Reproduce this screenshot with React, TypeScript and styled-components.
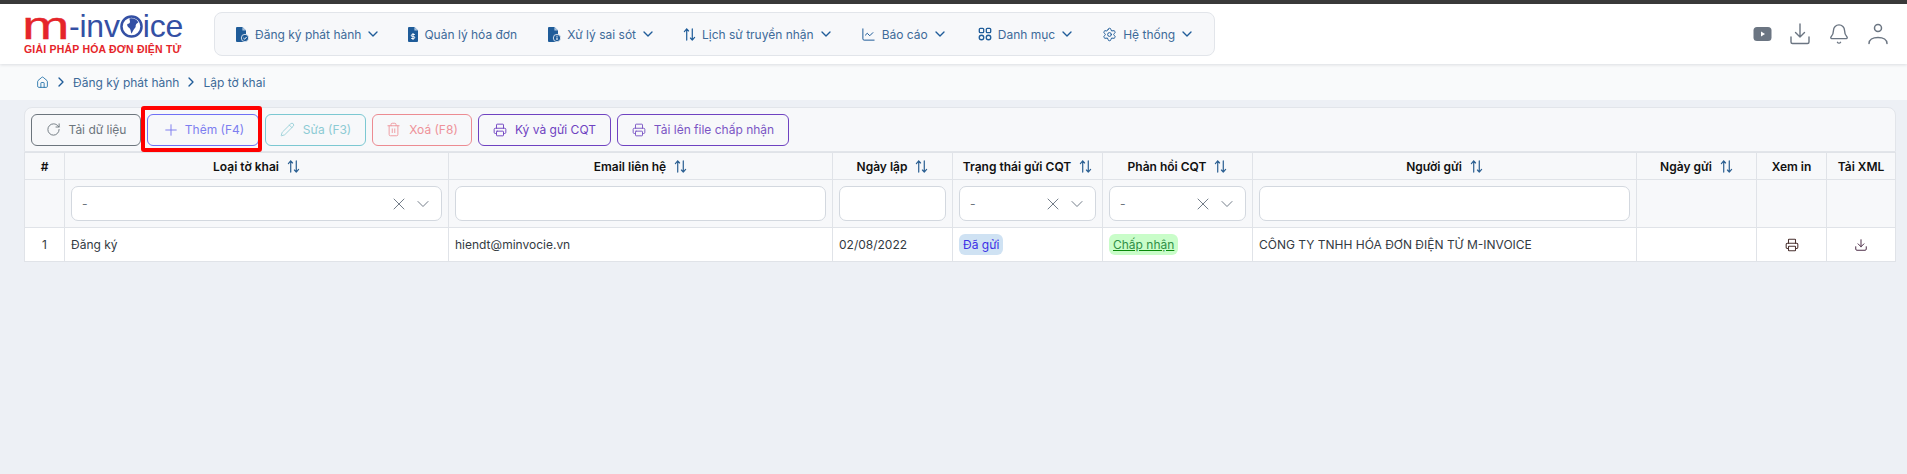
import styled, { createGlobalStyle } from "styled-components";
import {
  Bell,
  ChartLine,
  ChevronDown,
  ChevronRight,
  Download,
  House,
  Pencil,
  Plus,
  Printer,
  RotateCw,
  Settings,
  Trash2,
  X,
} from "lucide-react";

const GlobalStyle = createGlobalStyle`
  html, body {
    margin: 0;
    padding: 0;
    background: #edf0f5;
    min-height: 100%;
  }
  body {
    font-family: Inter, "Noto Sans", sans-serif;
    font-size: 12px;
    color: #212529;
  }
  * { box-sizing: border-box; }
`;

function FileBadge({ kind }: { kind: "check" | "dollar" | "info" }) {
  const wide = kind !== "dollar";
  return (
    <svg width={wide ? 13 : 10} height="15" viewBox={wide ? "0 0 13 15" : "0 0 10 15"}>
      <path
        d="M1 0h5.400L10 3.600V14a1 1 0 0 1-1 1H1a1 1 0 0 1-1-1V1a1 1 0 0 1 1-1z"
        fill="#1f5c99"
      />
      <path d="M6.400 0v3.600H10z" fill="#a9c3de" />
      {kind === "dollar" ? (
        <path d="M5 6v7M6.800 7.500H4.300a.9.9 0 0 0 0 2h1.400a.9.9 0 0 1 0 2H3.200" stroke="#fff" strokeWidth="1" fill="none" />
      ) : (
        <>
          <circle cx="9" cy="11" r="3.700" fill="#1f5c99" stroke="#f7f8fa" strokeWidth="0.800" />
          {kind === "check" ? (
            <path d="M7.400 11l1.200 1.200 2-2.200" stroke="#fff" strokeWidth="1" fill="none" />
          ) : (
            <path d="M9 10.500v2.500M9 8.700v1" stroke="#fff" strokeWidth="1.100" fill="none" />
          )}
        </>
      )}
    </svg>
  );
}

function SortArrows({ size = 13, color = "#2b5f92" }: { size?: number; color?: string }) {
  return (
    <svg width={size} height={size} viewBox="0 0 14 14" fill="none" stroke={color} strokeWidth="1.300" strokeLinecap="round" strokeLinejoin="round">
      <path d="M4 13V1M1.500 3.800L4 1l2 2.200" />
      <path d="M10 1v12M8 10.800l2 2.200 2.500-2.800" />
    </svg>
  );
}

function GridIcon() {
  return (
    <svg width="14" height="14" viewBox="0 0 16 16" fill="none" stroke="#1f5c99" strokeWidth="1.500">
      <rect x="1.500" y="1.500" width="5" height="5" rx="1.200" />
      <rect x="9.500" y="1.500" width="5" height="5" rx="1.200" />
      <circle cx="4" cy="12" r="2.600" />
      <circle cx="12" cy="12" r="2.600" />
    </svg>
  );
}

function Globe() {
  return (
    <svg width="23" height="23" viewBox="0 0 22 22">
      <circle cx="11" cy="11" r="9.600" fill="#fff" stroke="#3450a4" strokeWidth="2.400" />
      <path d="M9 3.500c3-1 7 .5 8.500 3.500-1 1.500-2 1-2.500 3 .5 2-1.500 3-2.500 5l-1.500 3c-1-2.500-.5-4-2-5.500-1.500-1-2.500-2.500-2-4 1.500 0 3-1 2.500-2.500z" fill="#3450a4" />
    </svg>
  );
}

function YoutubeIcon() {
  return (
    <svg width="19" height="16" viewBox="0 0 19 16">
      <rect x="0.500" y="1" width="18" height="14" rx="3.500" fill="#6b7582" />
      <path d="M8 5.500l4 2.500-4 2.500z" fill="#fff" />
    </svg>
  );
}

function SaveIcon() {
  return (
    <svg width="20" height="22" viewBox="0 0 20 22" fill="none" stroke="#6b7582" strokeWidth="1.400" strokeLinecap="round" strokeLinejoin="round">
      <path d="M10 1v13M5.500 9.500L10 14l4.500-4.500" />
      <path d="M1 14v5a1.500 1.500 0 0 0 1.500 1.500h15A1.500 1.500 0 0 0 19 19v-5" />
    </svg>
  );
}

function PersonIcon() {
  return (
    <svg width="20" height="22" viewBox="0 0 20 22" fill="none" stroke="#6b7582" strokeWidth="1.500" strokeLinecap="round">
      <circle cx="10" cy="5" r="3.500" />
      <path d="M1 20.500c0-3.500 3.500-6 9-6s9 2.500 9 6" />
    </svg>
  );
}

const menu = [
  { label: "Đăng ký phát hành", icon: <FileBadge kind="check" />, caret: true, extra: 0 },
  { label: "Quản lý hóa đơn", icon: <FileBadge kind="dollar" />, caret: false, extra: 4 },
  { label: "Xử lý sai sót", icon: <FileBadge kind="info" />, caret: true, extra: 0 },
  { label: "Lịch sử truyền nhận", icon: <SortArrows size={13} color="#1f5c99" />, caret: true, extra: 0 },
  { label: "Báo cáo", icon: <ChartLine size={15} color="#1f5c99" strokeWidth={1.6} />, caret: true, extra: 3 },
  { label: "Danh mục", icon: <GridIcon />, caret: true, extra: 0 },
  { label: "Hệ thống", icon: <Settings size={15} color="#1f5c99" strokeWidth={1.6} />, caret: true, extra: 0 },
];

const columns = [
  { title: "#", width: 40, sort: false, filter: "none" },
  { title: "Loại tờ khai", width: 384, sort: true, filter: "select" },
  { title: "Email liên hệ", width: 384, sort: true, filter: "input" },
  { title: "Ngày lập", width: 120, sort: true, filter: "input" },
  { title: "Trạng thái gửi CQT", width: 150, sort: true, filter: "select" },
  { title: "Phản hồi CQT", width: 150, sort: true, filter: "select" },
  { title: "Người gửi", width: 384, sort: true, filter: "input" },
  { title: "Ngày gửi", width: 120, sort: true, filter: "none" },
  { title: "Xem in", width: 70, sort: false, filter: "none" },
  { title: "Tải XML", width: 69, sort: false, filter: "none" },
];

export default function App() {
  return (
    <>
      <GlobalStyle />
      <TopStrip />
      <Header>
        <Logo>
          <LogoTop>
            <LogoM>m</LogoM>
            <LogoWord>-inv</LogoWord>
            <Globe />
            <LogoWord>ice</LogoWord>
          </LogoTop>
          <LogoSlogan>GIẢI PHÁP HÓA ĐƠN ĐIỆN TỬ</LogoSlogan>
        </Logo>
        <Nav>
          {menu.map((item) => (
            <NavItem key={item.label} $extra={item.extra}>
              <NavIcon>{item.icon}</NavIcon>
              <span>{item.label}</span>
              {item.caret && <NavCaret size={16} color="#1f5c99" strokeWidth={2} />}
            </NavItem>
          ))}
        </Nav>
        <HeaderIcons>
          <YoutubeIcon />
          <SaveIcon />
          <Bell size={22} color="#6b7582" strokeWidth={1.5} />
          <PersonIcon />
        </HeaderIcons>
      </Header>
      <Breadcrumb>
        <House size={13} color="#1f6fa8" strokeWidth={1.6} />
        <ChevronRight size={16} color="#1f5c99" />
        <Crumb>Đăng ký phát hành</Crumb>
        <ChevronRight size={16} color="#1f5c99" />
        <Crumb>Lập tờ khai</Crumb>
      </Breadcrumb>
      <Content>
        <Toolbar>
          <ActionButton $color="#6c757d" $text="#6c757d" $width={110}>
            <RotateCw size={15} strokeWidth={1.5} />
            Tải dữ liệu
          </ActionButton>
          <Highlighted>
            <ActionButton $color="#6f70f5" $text="#7d7ef0" $width={112} $gap={5}>
              <Plus size={18} strokeWidth={1.3} />
              Thêm (F4)
            </ActionButton>
            <RedFrame />
          </Highlighted>
          <ActionButton $color="#7cc8d2" $text="#8ccbd4" $width={101}>
            <Pencil size={15} strokeWidth={1.3} />
            Sửa (F3)
          </ActionButton>
          <ActionButton $color="#ec8b92" $text="#ee9299" $width={100}>
            <Trash2 size={15} strokeWidth={1.4} />
            Xoá (F8)
          </ActionButton>
          <ActionButton $color="#6f42c1" $text="#6f42c1" $width={133}>
            <Printer size={14} strokeWidth={1.6} />
            Ký và gửi CQT
          </ActionButton>
          <ActionButton $color="#6f42c1" $text="#7a55c4" $width={172}>
            <Printer size={14} strokeWidth={1.6} />
            Tải lên file chấp nhận
          </ActionButton>
        </Toolbar>
        <Table>
          <colgroup>
            {columns.map((c) => (
              <col key={c.title} width={c.width} />
            ))}
          </colgroup>
          <thead>
            <tr>
              {columns.map((c) => (
                <HeadCell key={c.title}>
                  <HeadInner>
                    {c.title}
                    {c.sort && <SortArrows />}
                  </HeadInner>
                </HeadCell>
              ))}
            </tr>
            <tr>
              {columns.map((c) => (
                <FilterCell key={c.title}>
                  {c.filter === "input" && <FilterInput />}
                  {c.filter === "select" && (
                    <FilterSelect>
                      <span>-</span>
                      <SelectIcons>
                        <X size={20} strokeWidth={1.1} />
                        <ChevronDown size={20} strokeWidth={1.1} />
                      </SelectIcons>
                    </FilterSelect>
                  )}
                </FilterCell>
              ))}
            </tr>
          </thead>
          <tbody>
            <tr>
              <DataCell $center>1</DataCell>
              <DataCell>Đăng ký</DataCell>
              <DataCell>hiendt@minvocie.vn</DataCell>
              <DataCell>02/08/2022</DataCell>
              <DataCell>
                <Badge $bg="#cfe2f3" $fg="#3b2fe6">Đã gửi</Badge>
              </DataCell>
              <DataCell>
                <Badge $bg="#c9fdc9" $fg="#2f8f46" $underline>Chấp nhận</Badge>
              </DataCell>
              <DataCell>CÔNG TY TNHH HÓA ĐƠN ĐIỆN TỬ M-INVOICE</DataCell>
              <DataCell />
              <DataCell $center>
                <Printer size={14} color="#4a3230" strokeWidth={1.8} />
              </DataCell>
              <DataCell $center>
                <Download size={14} color="#4a2a45" strokeWidth={1.7} />
              </DataCell>
            </tr>
          </tbody>
        </Table>
      </Content>
    </>
  );
}

const TopStrip = styled.div`
  height: 4px;
  background: #3a3a3a;
`;

const Header = styled.header`
  display: flex;
  align-items: center;
  height: 60px;
  padding: 0 19px 0 24px;
  background: #fff;
  box-shadow: 0 1px 3px rgba(40, 50, 70, 0.14);
  position: relative;
`;

const Logo = styled.div`
  display: flex;
  flex-direction: column;
  width: 190px;
  flex-shrink: 0;
`;

const LogoTop = styled.div`
  display: flex;
  align-items: center;
  height: 26px;
`;

const LogoM = styled.span`
  display: inline-block;
  width: 47px;
  margin-left: -2px;
  font-family: "Liberation Sans", sans-serif;
  font-size: 38px;
  line-height: 26px;
  color: #e5252a;
  transform: scaleX(1.5);
  transform-origin: left center;
  -webkit-text-stroke: 0.3px #e5252a;
`;

const LogoWord = styled.span`
  font-family: "Liberation Sans", sans-serif;
  font-size: 32px;
  line-height: 26px;
  color: #3450a4;
  letter-spacing: -0.2px;
`;

const LogoSlogan = styled.div`
  font-family: "Liberation Sans", sans-serif;
  font-size: 10.500px;
  font-weight: 700;
  line-height: 12px;
  color: #e5252a;
  letter-spacing: 0.2px;
  margin-top: 4px;
  white-space: nowrap;
`;

const Nav = styled.nav`
  display: flex;
  align-items: center;
  gap: 27px;
  width: 1001px;
  height: 44px;
  padding-left: 21px;
  background: #f7f8fa;
  border: 1px solid #e2e5ea;
  border-radius: 8px;
`;

const NavItem = styled.div<{ $extra: number }>`
  display: flex;
  align-items: center;
  gap: 6px;
  padding-right: ${(p) => p.$extra}px;
  font-size: 12px;
  color: #3d6a99;
  white-space: nowrap;
`;

const NavCaret = styled(ChevronDown)`
  margin-left: -2px;
`;

const NavIcon = styled.span`
  display: inline-flex;
  align-items: center;
`;

const HeaderIcons = styled.div`
  margin-left: auto;
  display: flex;
  align-items: center;
  gap: 18px;
`;

const Breadcrumb = styled.div`
  display: flex;
  align-items: center;
  gap: 4px;
  height: 36px;
  padding-left: 36px;
  background: #f9fafb;
`;

const Crumb = styled.span`
  font-size: 12px;
  color: #3d6a99;
`;

const Content = styled.main`
  padding: 7px 11px 0 24px;
`;

const Toolbar = styled.div`
  display: flex;
  align-items: center;
  gap: 6px;
  height: 45px;
  padding: 0 6px;
  background: #f7f8fa;
  border: 1px solid #e2e5ea;
  border-radius: 8px 8px 0 0;
`;

const ActionButton = styled.button<{ $color: string; $text: string; $width: number; $gap?: number }>`
  display: flex;
  align-items: center;
  justify-content: center;
  gap: ${(p) => p.$gap ?? 8}px;
  width: ${(p) => p.$width}px;
  height: 32px;
  padding: 0;
  font-family: inherit;
  font-size: 12px;
  white-space: nowrap;
  color: ${(p) => p.$text};
  background: transparent;
  border: 1px solid ${(p) => p.$color};
  border-radius: 6px;
`;

const Highlighted = styled.div`
  position: relative;
`;

const RedFrame = styled.div`
  position: absolute;
  top: -8px;
  bottom: -6px;
  left: -6px;
  right: -3px;
  border: 4px solid #f00;
  border-radius: 3px;
  pointer-events: none;
`;

const Table = styled.table`
  width: 100%;
  table-layout: fixed;
  border-collapse: collapse;
`;

const HeadCell = styled.th`
  height: 27px;
  padding: 0;
  background: #f7f8fa;
  border: 1px solid #e0e3e8;
  font-size: 12px;
  font-weight: 600;
  color: #111;
`;

const HeadInner = styled.div`
  display: flex;
  align-items: center;
  justify-content: center;
  gap: 8px;
`;

const FilterCell = styled.td`
  height: 48px;
  padding: 0 6px;
  background: #f7f8fa;
  border: 1px solid #e0e3e8;
`;

const FilterInput = styled.input`
  display: block;
  width: 100%;
  height: 35px;
  background: #fff;
  border: 1px solid #d3d8df;
  border-radius: 7px;
`;

const FilterSelect = styled.div`
  display: flex;
  align-items: center;
  justify-content: space-between;
  height: 35px;
  padding: 0 8px 0 10px;
  font-size: 12px;
  color: #6c757d;
  background: #fff;
  border: 1px solid #d3d8df;
  border-radius: 7px;
`;

const SelectIcons = styled.div`
  display: flex;
  align-items: center;
  gap: 4px;
  color: #66717e;
`;

const DataCell = styled.td<{ $center?: boolean }>`
  height: 34px;
  padding: 0 6px;
  text-align: ${(p) => (p.$center ? "center" : "left")};
  font-size: 12px;
  color: #333a42;
  background: #fff;
  border: 1px solid #e0e3e8;
  white-space: nowrap;
  svg {
    vertical-align: middle;
  }
`;

const Badge = styled.span<{ $bg: string; $fg: string; $underline?: boolean }>`
  display: inline-block;
  padding: 0 4px;
  line-height: 21px;
  border-radius: 6px;
  background: ${(p) => p.$bg};
  color: ${(p) => p.$fg};
  text-decoration: ${(p) => (p.$underline ? "underline" : "none")};
  text-decoration-color: #0a8a0a;
`;
